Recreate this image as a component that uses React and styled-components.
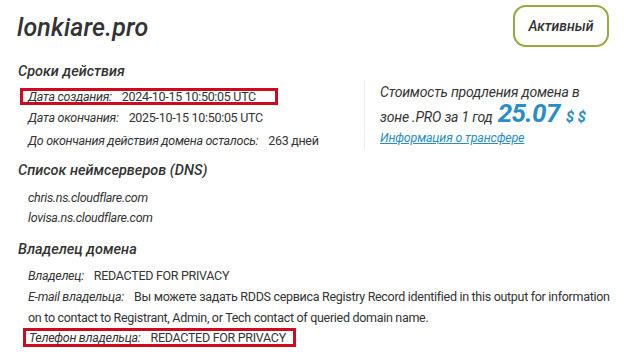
import React from "react";
import styled, { createGlobalStyle } from "styled-components";

const Global = createGlobalStyle`
  html, body { margin: 0; padding: 0; background: #fff; }
  body { font-family: Roboto, "Noto Sans", sans-serif; color: #333; }
`;

const Page = styled.div`
  width: 624px;
  height: 357px;
  box-sizing: border-box;
  padding: 9px 8px 0 18px;
  overflow: hidden;
`;

const Header = styled.div`
  display: flex;
  justify-content: space-between;
  align-items: flex-start;
`;

const Title = styled.h1`
  margin: 4px 0 0 -1px;
  font-size: 25px;
  line-height: 30px;
  font-style: italic;
  font-weight: 500;
  letter-spacing: 0.2px;
  color: #333;
`;

const Badge = styled.div`
  margin: -4px 7px 0 0;
  width: 96px;
  height: 42px;
  box-sizing: border-box;
  border: 2px solid #92ab3a;
  border-radius: 13px;
  display: flex;
  align-items: center;
  justify-content: center;
  font-size: 14px;
  font-style: italic;
  font-weight: 500;
  color: #333;
`;

const Heading = styled.h2`
  margin: ${(p) => p.$mt || 0}px 0 0 0;
  font-size: 14.5px;
  font-style: italic;
  font-weight: 500;
  color: #333;
  line-height: 18px;
`;

const TwoCol = styled.div`
  display: flex;
  align-items: flex-start;
`;

const LeftCol = styled.div`
  width: 346px;
`;

const Rows = styled.div`
  display: flex;
  flex-direction: column;
  padding-left: 10px;
  margin-top: ${(p) => p.$mt || 0}px;
`;

const Row = styled.div`
  font-size: 12.5px;
  line-height: ${(p) => p.$lh || 21}px;
  letter-spacing: -0.3px;
  color: #333;
  ${(p) =>
    p.$boxed
      ? `
    align-self: flex-start;
    border: 3px solid #cf0a1f;
    margin-left: ${p.$boxOffset || 0}px;
    padding-left: ${p.$pad || 0}px;
    padding-right: ${p.$padR || 0}px;
    line-height: ${p.$boxH}px;
    margin-top: ${p.$mt || 0}px;
    margin-bottom: ${p.$mb || 0}px;
  `
      : ""}
`;

const Label = styled.i`
  margin-right: 10px;
`;

const Plain = styled.span`
  font-style: normal;
`;

const Divider = styled.div`
  width: 1px;
  background: #ececec;
  margin: 33px 15px 0 0;
  height: 69px;
`;

const Price = styled.div`
  padding-top: 35px;
  font-size: 14px;
  font-style: italic;
  line-height: 21px;
  letter-spacing: -0.2px;
  color: #333;
`;

const Amount = styled.span`
  font-size: 26px;
  font-weight: 700;
  color: #2a8dc5;
  margin-left: 5px;
  letter-spacing: -0.6px;
`;

const Currency = styled.span`
  font-size: 15px;
  font-weight: 700;
  color: #2a8dc5;
  margin-left: 6px;
`;

const Link = styled.a`
  display: block;
  font-size: 12.5px;
  line-height: 15px;
  font-style: italic;
  letter-spacing: -0.2px;
  color: #2a8dc5;
  text-decoration: underline;
  margin-top: 2px;
`;

export default function App() {
  return (
    <Page>
      <Global />
      <Header>
        <Title>lonkiare.pro</Title>
        <Badge>Активный</Badge>
      </Header>

      <TwoCol>
        <LeftCol>
          <Heading $mt={16}>Сроки действия</Heading>
          <Rows $mt={7}>
            <Row $boxed $boxH={11} $mb={2} $boxOffset={-8} $pad={5} $padR={19}>
              <Label>Дата создания:</Label>
              <Plain>2024-10-15 10:50:05 UTC</Plain>
            </Row>
            <Row $lh={22.5}>
              <Label>Дата окончания:</Label>
              <Plain>2025-10-15 10:50:05 UTC</Plain>
            </Row>
            <Row $lh={22.5}>
              <Label>До окончания действия домена осталось:</Label>
              <Plain>263 дней</Plain>
            </Row>
          </Rows>
        </LeftCol>
        <Divider />
        <Price>
          <div>Стоимость продления домена в</div>
          <div>
            зоне .PRO за 1 год<Amount>25.07</Amount>
            <Currency>$ $</Currency>
          </div>
          <Link href="#">Информация о трансфере</Link>
        </Price>
      </TwoCol>

      <Heading $mt={10}>Список неймсерверов (DNS)</Heading>
      <Rows $mt={8}>
        <Row $lh={20}><Label>chris.ns.cloudflare.com</Label></Row>
        <Row $lh={20}><Label>lovisa.ns.cloudflare.com</Label></Row>
      </Rows>

      <Heading $mt={13}>Владелец домена</Heading>
      <Rows $mt={6}>
        <Row>
          <Label>Владелец:</Label>
          <Plain>REDACTED FOR PRIVACY</Plain>
        </Row>
        <Row>
          <Label>E-mail владельца:</Label>
          <Plain>
            Вы можете задать RDDS сервиса Registry Record identified in this output for information on to contact to Registrant, Admin, or Tech contact of queried domain name.
          </Plain>
        </Row>
        <Row $boxed $boxH={13} $mt={0} $boxOffset={-5} $pad={3} $padR={7}>
          <Label>Телефон владельца:</Label>
          <Plain>REDACTED FOR PRIVACY</Plain>
        </Row>
      </Rows>
    </Page>
  );
}
